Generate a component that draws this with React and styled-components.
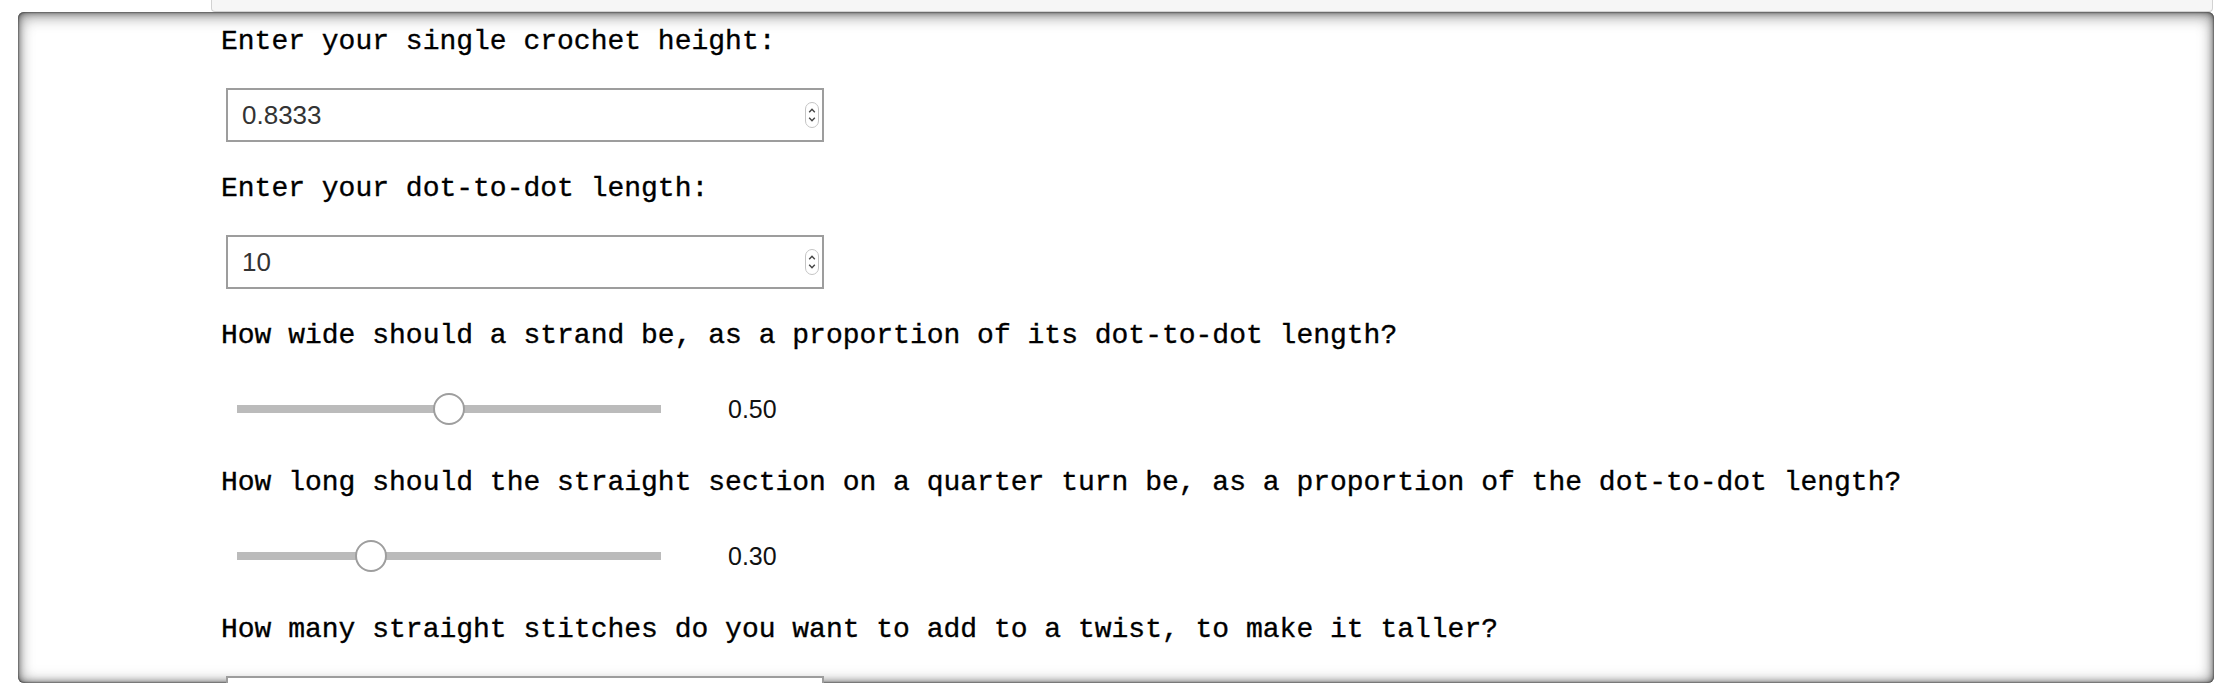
import React from 'react';
import styled, { createGlobalStyle } from 'styled-components';

const GlobalStyle = createGlobalStyle`
    html, body {
        margin: 0;
        padding: 0;
        background: #fff;
    }
    body {
        width: 2230px;
        height: 692px;
        overflow: hidden;
    }
`;

const Page = styled.div`
    display: flex;
    flex-direction: column;
`;

// bottom edge of the card that sits above the panel
const TopStrip = styled.div`
    height: 11px;
    margin: 0 17px 0 211px;
    background: #f6f6f6;
    border: 1px solid #d2d2d2;
    border-top: none;
    border-radius: 0 0 4px 4px;
`;

const Panel = styled.div`
    margin-left: 18px;
    width: 2196px;
    height: 671px;
    box-sizing: border-box;
    padding: 14px 0 0 203px;
    border-radius: 6px;
    background: #fff;
    box-shadow: inset 0 0 2px rgba(0, 0, 0, 0.9),
        inset 0 0 7px rgba(0, 0, 0, 0.5),
        inset 0 0 16px rgba(0, 0, 0, 0.35),
        inset 0 6px 16px rgba(0, 0, 0, 0.2);
    overflow: hidden;
`;

const Section = styled.section`
    display: flex;
    flex-direction: column;
    align-items: flex-start;
    margin-bottom: 31px;
`;

const Label = styled.label`
    font-family: 'Courier New', 'Liberation Mono', monospace;
    font-size: 28px;
    line-height: 32px;
    color: #000;
    white-space: nowrap;
    -webkit-text-stroke: 0.35px #000;
    margin-bottom: 30px;
`;

const NumberField = styled.div`
    display: flex;
    align-items: center;
    box-sizing: border-box;
    width: 598px;
    height: 54px;
    margin-left: 5px;
    padding: 0 3px 0 14px;
    border: 2px solid #9d9d9d;
    background: #fff;
`;

const NumberInput = styled.input`
    flex: 1;
    min-width: 0;
    padding: 0;
    border: none;
    outline: none;
    background: transparent;
    font-family: 'Liberation Sans', Arial, sans-serif;
    font-size: 26px;
    color: #333;
`;

const SliderRow = styled.div`
    display: flex;
    align-items: center;
    height: 54px;
`;

const Range = styled.input.attrs({ type: 'range' })`
    -webkit-appearance: none;
    appearance: none;
    width: 424px;
    height: 32px;
    margin: 0 67px 0 16px;
    padding: 0;
    background: transparent;

    &::-webkit-slider-runnable-track {
        height: 8px;
        background: #bbbbbb;
        border: none;
    }
    &::-webkit-slider-thumb {
        -webkit-appearance: none;
        box-sizing: border-box;
        width: 32px;
        height: 32px;
        margin-top: -12px;
        border-radius: 50%;
        background: #fff;
        border: 2px solid #9e9e9e;
    }
`;

const RangeValue = styled.span`
    font-family: 'Liberation Sans', Arial, sans-serif;
    font-size: 25px;
    color: #111;
`;

const Spinner = () => (
    <svg width="14" height="26" viewBox="0 0 14 26">
        <rect
            x="0.5"
            y="0.5"
            width="13"
            height="25"
            rx="6.5"
            fill="#fff"
            stroke="#c4c4c4"
        />
        <path
            d="M4.2 10.2 L7 7.2 L9.8 10.2"
            fill="none"
            stroke="#444"
            strokeWidth="1.4"
        />
        <path
            d="M4.2 15.8 L7 18.8 L9.8 15.8"
            fill="none"
            stroke="#444"
            strokeWidth="1.4"
        />
    </svg>
);

const fields = [
    { label: 'Enter your single crochet height:', kind: 'number', value: '0.8333' },
    { label: 'Enter your dot-to-dot length:', kind: 'number', value: '10' },
    {
        label: 'How wide should a strand be, as a proportion of its dot-to-dot length?',
        kind: 'range',
        value: 0.5,
    },
    {
        label: 'How long should the straight section on a quarter turn be, as a proportion of the dot-to-dot length?',
        kind: 'range',
        value: 0.3,
    },
    {
        label: 'How many straight stitches do you want to add to a twist, to make it taller?',
        kind: 'number',
        value: '0',
    },
];

const App = () => {
    return (
        <Page>
            <GlobalStyle />
            <TopStrip />
            <Panel>
                {fields.map((f) => (
                    <Section key={f.label}>
                        <Label>{f.label}</Label>
                        {f.kind === 'number' ? (
                            <NumberField>
                                <NumberInput type="text" defaultValue={f.value} />
                                <Spinner />
                            </NumberField>
                        ) : (
                            <SliderRow>
                                <Range
                                    min="0"
                                    max="1"
                                    step="0.01"
                                    defaultValue={f.value}
                                />
                                <RangeValue>{f.value.toFixed(2)}</RangeValue>
                            </SliderRow>
                        )}
                    </Section>
                ))}
            </Panel>
        </Page>
    );
};

export default App;
